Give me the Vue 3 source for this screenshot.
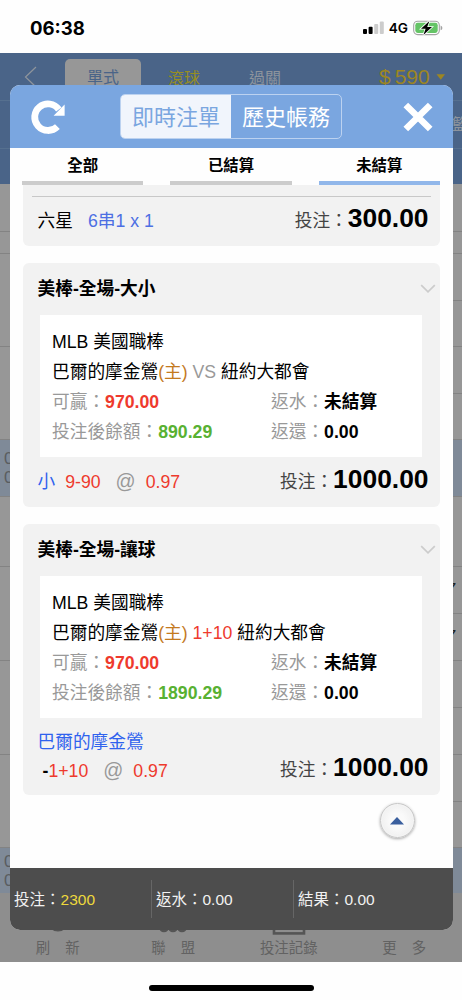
<template>
  <div class="phone">
    <div class="status">
      <span class="time">06:38</span>
      <div class="status-right">
        <svg class="signal" width="21" height="13" viewBox="0 0 21 13">
          <rect x="0" y="8" width="4" height="5" rx="1" fill="#000" />
          <rect x="5.6" y="5.8" width="4" height="7.2" rx="1" fill="#000" />
          <rect x="11.2" y="3" width="4" height="10" rx="1" fill="#ccc" />
          <rect x="16.8" y="0.4" width="4" height="12.6" rx="1" fill="#ccc" />
        </svg>
        <span class="net">4G</span>
        <svg class="battery" width="30" height="16" viewBox="0 0 30 16">
          <rect x="0.7" y="1.2" width="25.6" height="13.4" rx="4" fill="#fff" stroke="#a3a3a3" stroke-width="1.1" />
          <rect x="2.3" y="2.8" width="22.4" height="10.2" rx="2.4" fill="#65c466" />
          <path d="M27.6 5.6 Q29.4 6.2 29.4 7.9 Q29.4 9.6 27.6 10.2 Z" fill="#a3a3a3" />
          <path d="M16.4 0.9 L8 8.7 H12.6 L10.4 15 L19 7 H14.2 Z" fill="#000" stroke="#fff" stroke-width="1.6" paint-order="stroke" />
        </svg>
      </div>
    </div>

    <div class="page">
      <div class="top">
        <div class="top-nav">
          <svg class="back" width="14" height="22" viewBox="0 0 14 22">
            <path d="M12 1 L1.5 11 L12 21" fill="none" stroke="#8f959c" stroke-width="1.2" />
          </svg>
          <span class="kind kind-on">單式</span>
          <span class="kind kind-live">滾球</span>
          <span class="kind kind-pass">過關</span>
          <span class="money"><i>$</i>590</span>
          <svg class="caret" width="10" height="6" viewBox="0 0 10 6"><path d="M0.5 0.3 H9 L4.8 5.8 Z" fill="#9d8622" /></svg>
        </div>
        <div class="top-sports"><span>籃</span></div>
      </div>
      <div class="odds">
        <div class="side">
          <div v-for="(r, i) in leftRows" :key="i" class="odd-row" :class="{ tint: r.tint }" :style="{ height: r.h + 'px' }">
            <template v-if="r.tint"><span>0</span><span>0</span></template>
          </div>
        </div>
        <div class="side side-r">
          <div v-for="(r, i) in rightRows" :key="i" class="odd-row" :class="{ tint: r.tint }" :style="{ height: r.h + 'px' }">
            <b v-if="r.mark">7</b>
          </div>
        </div>
      </div>
      <div class="tabbar">
        <div class="tab-item">
          <svg width="36" height="30" viewBox="0 0 36 30"><circle cx="18" cy="12" r="9" fill="none" stroke="#555" stroke-width="3" /></svg>
          <span>刷<em></em>新</span>
        </div>
        <div class="tab-item">
          <svg width="36" height="30" viewBox="0 0 36 30" fill="none" stroke="#555" stroke-width="2.4">
            <circle cx="9" cy="18" r="4" /><circle cx="18" cy="18" r="4" /><circle cx="27" cy="18" r="4" />
          </svg>
          <span>聯<em></em>盟</span>
        </div>
        <div class="tab-item">
          <svg width="36" height="30" viewBox="0 0 36 30"><rect x="3" y="2" width="30" height="22.4" fill="none" stroke="#555" stroke-width="2.6" /></svg>
          <span>投注記錄</span>
        </div>
        <div class="tab-item">
          <svg width="36" height="30" viewBox="0 0 36 30"></svg>
          <span>更<em></em>多</span>
        </div>
      </div>
    </div>

    <div class="home"><div class="home-bar"></div></div>

    <div class="modal">
      <div class="modal-head">
        <svg class="reload" width="36" height="36" viewBox="0 0 36 36">
          <path d="M27.2 27.6 A13.3 13.3 0 1 1 28.6 10.4" transform="translate(0.2 0)" fill="none" stroke="#fff" stroke-width="6.8" />
          <path d="M34.6 5.6 V16.7 H23.6 Z" fill="#fff" />
        </svg>
        <div class="seg">
          <span class="seg-on">即時注單</span>
          <span>歷史帳務</span>
        </div>
        <svg class="close" width="30" height="30" viewBox="0 0 30 30">
          <path d="M2.8 3 L27.2 27 M27.2 3 L2.8 27" stroke="#fff" stroke-width="6.6" />
        </svg>
      </div>

      <div class="filters">
        <div v-for="f in filters" :key="f" class="filter" :class="{ active: f === current }">{{ f }}</div>
      </div>

      <div class="list">
        <div class="card card-cut">
          <div class="cut-line"></div>
          <div class="foot">
            <div class="pick">六星<span class="combo">6串1 x 1</span></div>
            <div class="stake">投注：<b>300.00</b></div>
          </div>
        </div>

        <div v-for="(b, i) in bets" :key="i" class="card">
          <div class="card-head">
            <span>{{ b.title }}</span>
            <svg width="16" height="10" viewBox="0 0 16 10"><path d="M1.2 1.2 L8 7.8 L14.8 1.2" fill="none" stroke="#ccc" stroke-width="1.7" /></svg>
          </div>
          <div class="info">
            <div class="line">MLB 美國職棒</div>
            <div class="line">巴爾的摩金鶯<span class="host">(主)</span> <span :class="b.handicap ? 'red' : 'vs'">{{ b.handicap || 'VS' }}</span> 紐約大都會</div>
            <div class="line cols">
              <div><span class="lab">可贏：</span><b class="red">970.00</b></div>
              <div><span class="lab">返水：</span><b>未結算</b></div>
            </div>
            <div class="line cols">
              <div><span class="lab">投注後餘額：</span><b class="green">{{ b.balance }}</b></div>
              <div><span class="lab">返還：</span><b>0.00</b></div>
            </div>
          </div>
          <div class="foot" :class="{ tall: b.handicap }">
            <div v-if="b.handicap" class="pick">
              <div class="blue">巴爾的摩金鶯</div>
              <div class="odd-line"><b>-</b><span class="red">1+10</span><span class="at">@</span><span class="red">0.97</span></div>
            </div>
            <div v-else class="pick">
              <span class="blue">小</span><span class="red total">9-90</span><span class="at">@</span><span class="red">0.97</span>
            </div>
            <div class="stake">投注：<b>1000.00</b></div>
          </div>
        </div>

        <div class="to-top">
          <svg width="14" height="8" viewBox="0 0 14 8"><path d="M7 0 L14 7.4 H0 Z" fill="#3a5f9e" /></svg>
        </div>
      </div>

      <div class="sum">
        <div>投注：<span class="yellow">2300</span></div>
        <div>返水：0.00</div>
        <div>結果：0.00</div>
      </div>
    </div>
  </div>
</template>

<script setup>
import { ref } from 'vue'

const filters = ['全部', '已結算', '未結算']
const current = ref('未結算')

const bets = [
  { title: '美棒-全場-大小', balance: '890.29' },
  { title: '美棒-全場-讓球', balance: '1890.29', handicap: '1+10' },
]

// 背景賠率表的列高
const leftRows = [
  { h: 48 }, { h: 22 }, { h: 93 }, { h: 93 }, { h: 57, tint: true },
  { h: 70 }, { h: 94 }, { h: 94 }, { h: 93 }, { h: 46, tint: true },
]
const rightRows = [
  { h: 48 }, { h: 22 }, { h: 47 }, { h: 46 }, { h: 47 }, { h: 46 }, { h: 57, tint: true },
  { h: 70 }, { h: 47, mark: true }, { h: 47, mark: true }, { h: 47 }, { h: 47 }, { h: 47 }, { h: 46 }, { h: 46, tint: true },
]
</script>

<style>
body {
  margin: 0;
  background: #fff;
}
</style>

<style scoped>
.phone {
  position: relative;
  display: flex;
  flex-direction: column;
  width: 462px;
  height: 1000px;
  overflow: hidden;
  background: #fefefe;
  color: #000;
  font-family: "Liberation Sans", "Noto Sans CJK TC", sans-serif;
  font-size: 17.7px;
  white-space: nowrap;
}
.phone * {
  box-sizing: border-box;
}

/* 狀態列 */
.status {
  display: flex;
  align-items: center;
  justify-content: space-between;
  height: 53px;
  padding: 2px 19px 0 30px;
  font-family: Inter, sans-serif;
}
.time {
  font-size: 18.6px;
  font-weight: 700;
}
.status-right {
  display: flex;
  align-items: center;
}
.net {
  margin: 0 5px 0 5px;
  font-size: 13.6px;
  font-weight: 600;
}

/* 遮罩後的頁面 */
.page {
  display: flex;
  flex-direction: column;
  height: 909px;
  background: #979797;
}
.top {
  height: 131px;
  background: #4a6488;
}
.top-nav {
  display: flex;
  align-items: center;
  height: 48px;
  border-bottom: 1px solid #56708f;
  font-size: 16px;
}
.back {
  margin-left: 24px;
}
.kind {
  text-align: center;
  width: 76px;
}
.kind-on {
  align-self: flex-end;
  height: 41px;
  margin-left: 27px;
  border-radius: 5px 5px 0 0;
  background: #979797;
  color: #4a6488;
  line-height: 37px;
}
.kind-live {
  margin-left: 5px;
  color: #968e22;
}
.kind-pass {
  margin-left: 5px;
  color: #8d949d;
}
.money {
  margin-left: 76px;
  color: #9d8622;
  font-size: 21px;
}
.money i {
  margin-right: 4px;
  font-style: normal;
}
.caret {
  margin-left: 6px;
}
.top-sports {
  display: flex;
  align-items: center;
  justify-content: flex-end;
  height: 48px;
  margin-right: -6px;
  padding-bottom: 3px;
  border-bottom: 1px solid #56708f;
  color: #8d949d;
  font-size: 16px;
}
.odds {
  display: flex;
  justify-content: space-between;
  height: 709px;
}
.side {
  width: 231px;
}
.odd-row {
  display: flex;
  flex-direction: column;
  justify-content: center;
  padding-left: 4px;
  border-bottom: 1px solid #838383;
  color: #5a5d60;
  font-size: 17px;
  line-height: 19px;
}
.side-r .odd-row {
  align-items: flex-end;
  padding-right: 7px;
}
.side-r b {
  color: #222;
  font-size: 11px;
  font-style: italic;
  line-height: 14px;
  margin-top: -6px;
}
.tint {
  background: #7f8a98;
}
.tabbar {
  display: flex;
  justify-content: space-between;
  height: 69px;
  padding: 16px 0 0;
  background: #8e8e8e;
  color: #626262;
  font-size: 14.4px;
}
.tab-item {
  display: flex;
  flex-direction: column;
  align-items: center;
  width: 115.5px;
  line-height: 18px;
}
.tab-item em {
  display: inline-block;
  width: 15px;
}
.home {
  display: flex;
  justify-content: center;
  padding-top: 23px;
}
.home-bar {
  width: 165px;
  height: 6px;
  border-radius: 3px;
  background: #000;
}

/* 注單彈窗 */
.modal {
  position: absolute;
  top: 85px;
  left: 9.5px;
  display: flex;
  flex-direction: column;
  width: 443px;
  height: 845px;
  border-radius: 10px;
  overflow: hidden;
  background: #fefefe;
}
.modal-head {
  display: flex;
  align-items: center;
  height: 63px;
  padding: 0 20px;
  background: #7aa6e0;
}
.seg {
  display: flex;
  width: 222px;
  height: 45px;
  margin-left: 54.5px;
  border: 1px solid #bcd2f0;
  border-radius: 5px;
  overflow: hidden;
  color: #fff;
  font-size: 22px;
  line-height: 46px;
  text-align: center;
}
.seg span {
  flex: 1;
}
.seg .seg-on {
  background: #f1f5fc;
  color: #7aa6e0;
}
.close {
  margin-left: auto;
}
.filters {
  display: flex;
  gap: 27px;
  height: 37px;
  padding: 0 12.5px;
}
.filter {
  flex: 1;
  height: 37px;
  border-bottom: 4px solid #ccc;
  font-size: 15.4px;
  font-weight: 700;
  line-height: 36px;
  text-align: center;
}
.filter.active {
  border-color: #91b7ea;
}
.list {
  position: relative;
  display: flex;
  flex-direction: column;
  gap: 17px;
  height: 683px;
  padding: 0 13px;
}
.card {
  border-radius: 6px;
  background: #f2f2f2;
}
.card-cut {
  height: 61px;
  border-radius: 0 0 6px 6px;
}
.cut-line {
  height: 12px;
  margin: 0 9px;
  border-bottom: 1px solid #c8c8c8;
}
.card-head {
  display: flex;
  align-items: center;
  justify-content: space-between;
  height: 51.5px;
  padding: 0 4px 0 15px;
  font-weight: 700;
}
.card-head span {
  padding-bottom: 3px;
}
.info {
  height: 142.5px;
  margin: 0 17.5px;
  padding: 12.3px 12px 0;
  background: #fff;
}
.line {
  height: 30.2px;
  line-height: 30.2px;
}
.cols {
  display: grid;
  grid-template-columns: 219px 1fr;
}
.lab,
.vs {
  color: #999;
}
.host {
  color: #c47a1f;
}
.red {
  color: #ee3a2d;
}
.green {
  color: #58b132;
}
.blue {
  color: #2f62ee;
}
.foot {
  display: flex;
  justify-content: space-between;
  height: 50px;
  padding: 0 11px 0 15px;
  line-height: 48px;
}
.foot .stake {
  line-height: 44px;
}
.card-cut .stake {
  line-height: 42px;
}
.foot.tall {
  height: 77px;
}
.combo {
  margin-left: 15px;
  color: #4d6fe3;
}
.total {
  margin-left: 10px;
}
.at {
  margin: 0 10px 0 15px;
  color: #999;
  font-size: 19.8px;
}
.stake {
  color: #444;
}
.stake b {
  color: #000;
  font-size: 26.4px;
}
.tall .pick {
  padding-top: 10px;
  line-height: 28px;
}
.tall .odd-line {
  padding-left: 5px;
}
.tall .stake {
  padding-top: 27px;
}
.to-top {
  position: absolute;
  top: 618px;
  right: 38px;
  display: flex;
  align-items: center;
  justify-content: center;
  width: 35px;
  height: 35px;
  border: 1px solid #c6c6c6;
  border-radius: 50%;
  background: radial-gradient(circle, #fafafa 30%, #e9e9e9 100%);
  box-shadow: 0 1px 3px rgba(0, 0, 0, 0.35), inset 0 0 2px #fff;
}
.sum {
  display: flex;
  align-items: center;
  height: 62px;
  background: #4d4d4d;
  color: #f2f2f2;
  font-size: 15.5px;
}
.sum div {
  width: 142px;
  height: 38px;
  padding-left: 4.5px;
  border-right: 1px solid #666;
  line-height: 40px;
}
.sum div:last-child {
  border-right: 0;
}
.yellow {
  color: #eed93c;
}
</style>
